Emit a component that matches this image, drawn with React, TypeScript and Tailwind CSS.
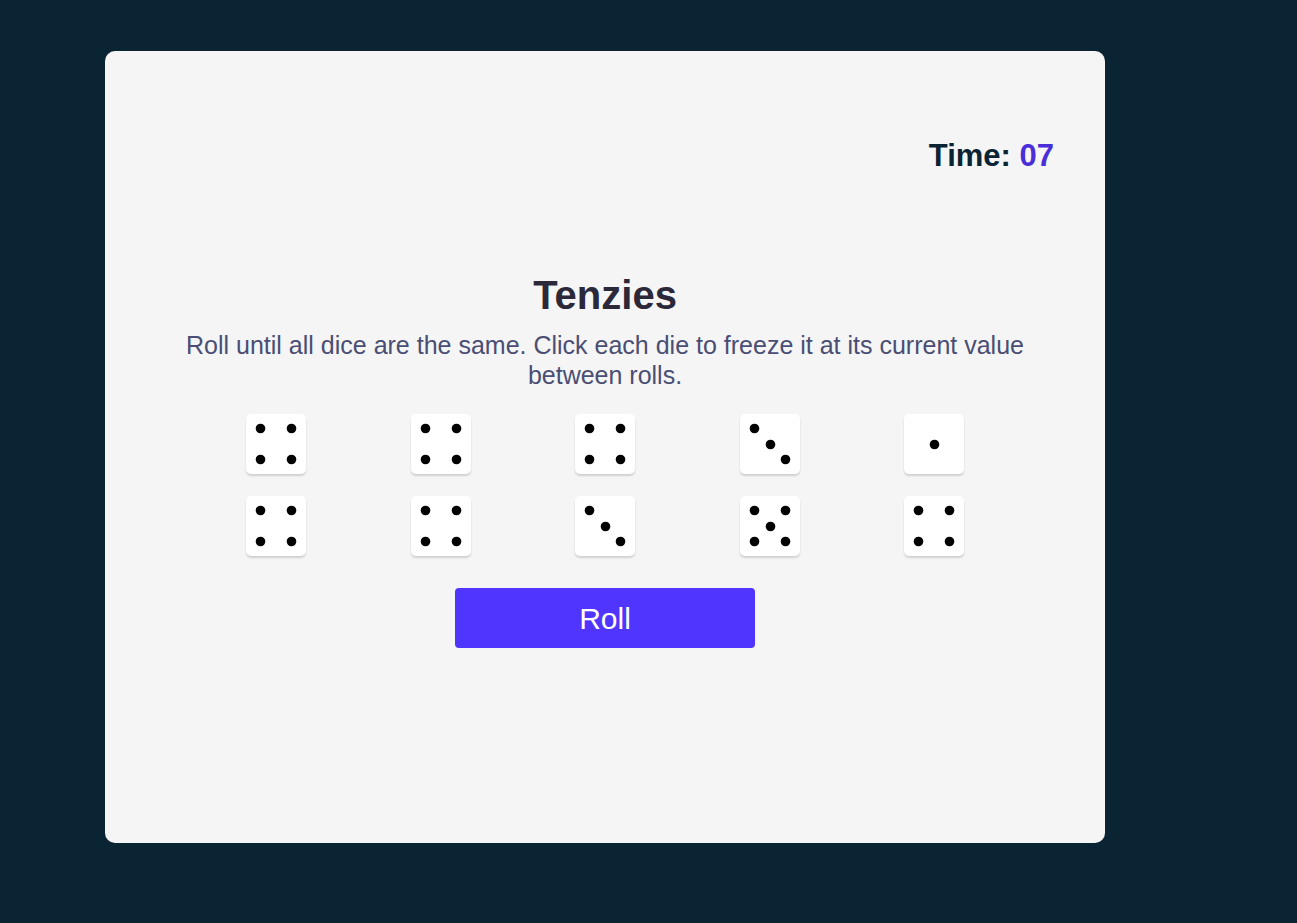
const dice = [4, 4, 4, 3, 1, 4, 4, 3, 5, 4];

// pip positions within a 60px die
const pips: Record<number, [number, number][]> = {
  1: [[30, 30]],
  3: [[14, 14], [30, 30], [45, 45]],
  4: [[14, 14], [45, 14], [14, 45], [45, 45]],
  5: [[14, 14], [45, 14], [30, 30], [14, 45], [45, 45]],
};

function Die({ value }: { value: number }) {
  return (
    <div className="h-[60px] w-[60px] rounded-[5px] bg-white shadow-[0_2px_2px_rgba(0,0,0,0.15)]">
      <svg width="60" height="60" viewBox="0 0 60 60">
        {pips[value].map(([x, y], i) => (
          <circle key={i} cx={x + 0.5} cy={y + 0.5} r="4.8" fill="#000" />
        ))}
      </svg>
    </div>
  );
}

export default function App() {
  return (
    <main
      className="min-h-screen bg-[#0B2434] pt-[51px] pl-[105px]"
      style={{ fontFamily: '"Liberation Sans", Arial, sans-serif' }}
    >
      <div className="flex h-[792px] w-[1000px] flex-col items-center rounded-[10px] bg-[#F5F5F5] px-[51px] pt-[89px]">
        <div className="flex h-8 w-full items-center justify-end text-[31px] leading-8 font-bold text-[#0B2434]">
          Time:&nbsp;<span className="text-[#4A2FD9]">07</span>
        </div>

        <h1 className="mt-[100px] text-[40px] leading-[46px] font-bold text-[#2B283A]">Tenzies</h1>
        <p className="mt-3 max-w-[870px] text-center text-[25px] leading-[30px] text-[#4A4E74]">
          Roll until all dice are the same. Click each die to freeze it at its current value between rolls.
        </p>

        <div className="mt-6 flex w-[718px] flex-col gap-[22px]">
          <div className="flex justify-between">
            {dice.slice(0, 5).map((v, i) => (
              <Die key={i} value={v} />
            ))}
          </div>
          <div className="flex justify-between">
            {dice.slice(5).map((v, i) => (
              <Die key={i} value={v} />
            ))}
          </div>
        </div>

        <button className="mt-8 h-[60px] w-[300px] rounded-[4px] bg-[#5035FF] text-[30px] text-white">
          Roll
        </button>
      </div>
    </main>
  );
}
